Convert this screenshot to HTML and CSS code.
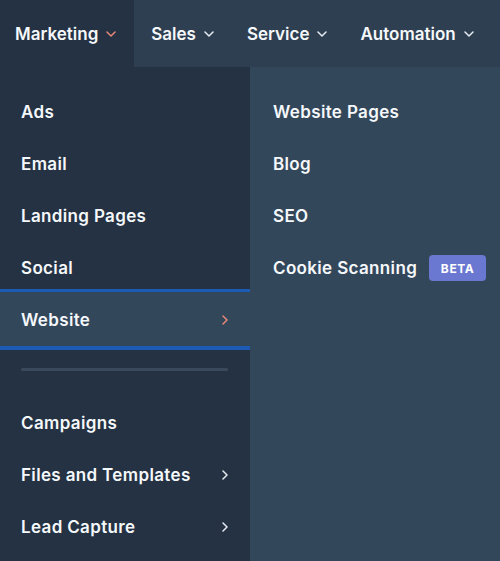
FILE: index.html
```html
<!DOCTYPE html>
<html>
<head>
<meta charset="utf-8">
<link rel="stylesheet" href="styles.css">
</head>
<body>
<nav class="topnav">
  <div class="tab tab-active">Marketing <svg class="caret caret-accent" viewBox="0 0 10 6"><path d="M1 1l4 4 4-4"/></svg></div>
  <div class="tab">Sales <svg class="caret" viewBox="0 0 10 6"><path d="M1 1l4 4 4-4"/></svg></div>
  <div class="tab">Service <svg class="caret" viewBox="0 0 10 6"><path d="M1 1l4 4 4-4"/></svg></div>
  <div class="tab">Automation <svg class="caret" viewBox="0 0 10 6"><path d="M1 1l4 4 4-4"/></svg></div>
</nav>
<div class="menu">
  <ul class="primary">
    <li class="item">Ads</li>
    <li class="item">Email</li>
    <li class="item">Landing Pages</li>
    <li class="item">Social</li>
    <li class="item item-selected">Website <svg class="chev chev-accent" viewBox="0 0 6 10"><path d="M1 1l4 4-4 4"/></svg></li>
    <li class="sep"><span class="sep-line"></span></li>
    <li class="item">Campaigns</li>
    <li class="item">Files and Templates <svg class="chev" viewBox="0 0 6 10"><path d="M1 1l4 4-4 4"/></svg></li>
    <li class="item">Lead Capture <svg class="chev" viewBox="0 0 6 10"><path d="M1 1l4 4-4 4"/></svg></li>
  </ul>
  <ul class="secondary">
    <li class="item">Website Pages</li>
    <li class="item">Blog</li>
    <li class="item">SEO</li>
    <li class="item">Cookie Scanning <span class="badge">BETA</span></li>
  </ul>
</div>
</body>
</html>
```
FILE: styles.css
```css
* { box-sizing: border-box; }
html, body { margin: 0; padding: 0; }
body {
  width: 500px;
  height: 561px;
  overflow: hidden;
  background: #33475b;
  font-family: "Inter", "Noto Sans", sans-serif;
  color: #f5f8fa;
}
.topnav {
  display: flex;
  height: 67px;
  background: #2e3f51;
}
.tab {
  display: flex;
  align-items: center;
  gap: 8px;
  height: 67px;
  padding: 0 16px 0 15px;
  font-size: 17px;
  font-weight: 600;
  white-space: nowrap;
}
.tab + .tab { padding-left: 17px; }
.tab-active { background: #243243; padding-right: 18px; }
.caret {
  width: 10px;
  height: 6px;
  fill: none;
  stroke: #e6ecf1;
  stroke-width: 1.5;
  stroke-linecap: round;
  stroke-linejoin: round;
  margin-top: 1px;
}
.caret-accent { stroke: #e8877a; }
.menu {
  display: flex;
  height: 494px;
}
.primary, .secondary {
  list-style: none;
  margin: 0;
  padding: 19px 0 0;
}
.primary {
  flex: 0 0 250px;
  width: 250px;
  background: #243243;
}
.secondary {
  flex: 1 1 auto;
  min-width: 0;
  background: #33475b;
}
.item {
  display: flex;
  align-items: center;
  height: 52px;
  padding: 0 21px;
  font-size: 17px;
  font-weight: 600;
  letter-spacing: 0.35px;
  white-space: nowrap;
}
.secondary .item { padding-left: 23px; padding-right: 0; }
.item-selected {
  background: #33475b;
  box-shadow: 0 -2px 0 #33475b, 0 -5px 0 #1c5bb3, 0 4px 0 #1c5bb3;
}
.chev {
  margin-left: auto;
  margin-right: 1px;
  width: 6px;
  height: 10px;
  fill: none;
  stroke: #e6ecf1;
  stroke-width: 1.5;
  stroke-linecap: round;
  stroke-linejoin: round;
}
.chev-accent { stroke: #e8877a; }
.sep {
  height: 51px;
  padding: 22px 21px 0;
}
.sep-line {
  display: block;
  width: 207px;
  height: 3px;
  border-radius: 2px;
  background: #3a4a5c;
}
.badge {
  display: inline-flex;
  align-items: center;
  justify-content: center;
  width: 57px;
  height: 26px;
  margin-left: 12px;
  border-radius: 4px;
  background: #6a78d1;
  font-size: 12px;
  font-weight: 700;
  letter-spacing: 0.6px;
  color: #ffffff;
}
```
